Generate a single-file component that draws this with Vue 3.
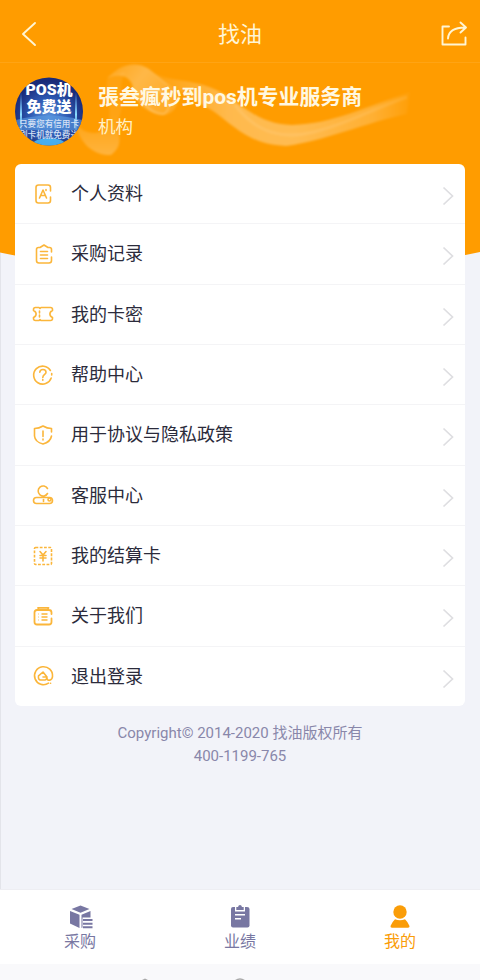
<script setup>
const items = [
  { icon: 'profile', label: '个人资料' },
  { icon: 'orders', label: '采购记录' },
  { icon: 'ticket', label: '我的卡密' },
  { icon: 'help', label: '帮助中心' },
  { icon: 'shield', label: '用于协议与隐私政策' },
  { icon: 'service', label: '客服中心' },
  { icon: 'bank', label: '我的结算卡' },
  { icon: 'about', label: '关于我们' },
  { icon: 'logout', label: '退出登录' },
]
</script>

<template>
  <div class="page">
    <svg class="backdrop" width="480" height="290" viewBox="0 0 480 290" aria-hidden="true">
      <defs>
        <filter id="soft" x="-10%" y="-20%" width="120%" height="140%"><feGaussianBlur stdDeviation="1.3" /></filter>
        <linearGradient id="sweep" gradientUnits="userSpaceOnUse" x1="150" x2="412" y1="0" y2="0">
          <stop offset="0" stop-color="#fff" stop-opacity=".03" />
          <stop offset=".3" stop-color="#fff" stop-opacity=".3" />
          <stop offset=".55" stop-color="#fff" stop-opacity=".32" />
          <stop offset=".85" stop-color="#fff" stop-opacity=".2" />
          <stop offset="1" stop-color="#fff" stop-opacity=".02" />
        </linearGradient>
        <linearGradient id="curl" gradientUnits="userSpaceOnUse" x1="110" x2="165" y1="64" y2="110">
          <stop offset="0" stop-color="#fff" stop-opacity=".1" />
          <stop offset=".45" stop-color="#fff" stop-opacity=".28" />
          <stop offset="1" stop-color="#fff" stop-opacity=".14" />
        </linearGradient>
        <linearGradient id="tail" gradientUnits="userSpaceOnUse" x1="0" x2="0" y1="70" y2="155">
          <stop offset="0" stop-color="#fff" stop-opacity=".06" />
          <stop offset=".6" stop-color="#fff" stop-opacity=".08" />
          <stop offset="1" stop-color="#fff" stop-opacity=".24" />
        </linearGradient>
      </defs>
      <path d="M0 0H480V252Q240 303 0 252.500Z" fill="#ff9c00" />
      <path d="M0 62.500H480" stroke="#ffa414" />
      <g filter="url(#soft)">
        <path d="M150 71C172 84 196 77 224 94C246 108 260 124 292 125C333 124 367 106 410 92L407 114C365 123 324 141 286 146C249 145 232 124 213 111C197 102 184 91 164 84Z" fill="url(#sweep)" />
        <path d="M108 78C119 65 135 60 149 69C160 78 168 84 177 91C180 104 174 115 162 115C145 112 136 104 133 88C132 78 121 72 108 78Z" fill="url(#curl)" />
        <path d="M108 76C103 96 116 112 105 129C96 137 82 132 76 124C79 143 94 156 111 155C127 143 115 131 118 120C126 106 116 90 125 72Z" fill="url(#tail)" />
        <path d="M144 90C140 104 151 114 164 114C176 105 162 95 158 88" fill="none" stroke="#fff" stroke-opacity=".2" stroke-width="2" />
        <path d="M235 105C258 135 285 139 314 132C347 124 368 111 407 97" fill="none" stroke="#fff" stroke-opacity=".1" stroke-width="3" />
      </g>
    </svg>

    <header class="bar">
      <svg class="back" width="18" height="26" viewBox="0 0 18 26"><path d="M15 2L3 13L15 24" /></svg>
      <h1>找油</h1>
      <svg class="share" width="30" height="28" viewBox="0 0 30 28">
        <path d="M10 6.500H3.500V24.500H26.500V17.500M9 18.500C9.500 11 15 7.500 26 7.500M21.500 2.500L27 7.500L21.500 12.500" />
      </svg>
    </header>

    <section class="user">
      <svg class="avatar" width="70" height="70" viewBox="0 0 70 70">
        <defs>
          <radialGradient id="blue" cx=".5" cy=".58" r=".52">
            <stop offset="0" stop-color="#5a92dc" />
            <stop offset=".55" stop-color="#2c57b0" />
            <stop offset="1" stop-color="#1a2a78" />
          </radialGradient>
          <linearGradient id="glow" x1="0" x2="0" y1="0" y2="1">
            <stop offset="0" stop-color="#6ebcff" stop-opacity="0" />
            <stop offset=".5" stop-color="#8bdcff" />
            <stop offset="1" stop-color="#62bbff" stop-opacity="0" />
          </linearGradient>
          <clipPath id="round"><circle cx="35" cy="34.500" r="34" /></clipPath>
        </defs>
        <g clip-path="url(#round)">
          <rect width="70" height="70" fill="url(#blue)" />
          <path d="M2 43Q35 34 68 43V53H2Z" fill="#5797df" opacity=".65" />
          <rect x="6" y="15" width="2" height="45" fill="url(#glow)" />
          <rect x="61" y="15" width="2" height="45" fill="url(#glow)" />
          <ellipse cx="35" cy="67" rx="16" ry="6" fill="#51c7ff" opacity=".8" />
          <g class="avatar-text">
            <text x="35" y="18" font-size="14.500" textLength="47" lengthAdjust="spacingAndGlyphs">POS机</text>
            <text x="35" y="34.500" font-size="14.500" textLength="45" lengthAdjust="spacingAndGlyphs">免费送</text>
            <text class="small" x="35" y="49.500" font-size="9" textLength="60" lengthAdjust="spacingAndGlyphs">只要您有信用卡</text>
            <text class="small" x="35" y="60.500" font-size="9" textLength="60" lengthAdjust="spacingAndGlyphs">刷卡机就免费送</text>
          </g>
        </g>
      </svg>
      <div class="identity">
        <h2>張叁瘋秒到pos机专业服务商</h2>
        <p>机构</p>
      </div>
    </section>

    <main class="card">
      <div v-for="item in items" :key="item.icon" class="row">
        <svg class="icon" width="22" height="22" viewBox="0 0 22 22">
          <template v-if="item.icon === 'profile'">
            <path d="M18.500 8V4.500Q18.500 2 16 2H6.500Q4 2 4 4.500V17.500Q4 20 6.500 20H16Q18.500 20 18.500 17.500V14" />
            <path d="M7.500 15L11 7L14.500 15M8.800 12.500H13.300M14 6.500V7.500" />
          </template>
          <template v-else-if="item.icon === 'orders'">
            <path d="M19.500 9V6.500Q19.500 4.500 17.500 4.500H16L12 2L8 4.500H6.500Q4.500 4.500 4.500 6.500V17.500Q4.500 20 7 20H17Q19.500 20 19.500 17.500V14" />
            <path d="M8.500 8.500H15.500M8.500 12H15.500M8.500 15.500H15.500" />
          </template>
          <template v-else-if="item.icon === 'ticket'">
            <path d="M3.500 4.500H7L8 5.500L9 4.500H18.500Q20.500 4.500 20.500 6.500V7.500C17 9 17 13 20.500 14.500V15.500Q20.500 17.500 18.500 17.500H9L8 16.500L7 17.500H3.500Q1.500 17.500 1.500 15.500V14.500C5 13 5 9 1.500 7.500V6.500Q1.500 4.500 3.500 4.500Z" />
            <path d="M7.500 8V10M7.500 12V14" />
          </template>
          <template v-else-if="item.icon === 'help'">
            <path d="M18.400 6.500A9 9 0 1 0 19.200 14M19.700 9.500V11" />
            <path d="M7.800 8.300C8 4.500 14 4.500 14 8.300C14 10.500 10.800 10.500 10.800 13.500M10.800 15.500V16.200" />
          </template>
          <template v-else-if="item.icon === 'shield'">
            <path d="M19.500 8V4.500Q15 4.500 11 2Q7 4.500 2.500 4.500V12Q3 18 11 20Q18.500 18 19.500 12" />
            <path d="M11 7V12.500M11 15V16" />
          </template>
          <template v-else-if="item.icon === 'service'">
            <path d="M15.500 4.500A5 5 0 1 0 15.500 9.500M4.500 13.500H17.500A3 3 0 0 1 17.500 19.500H4.500A3 3 0 0 1 4.500 13.500Z" />
            <path d="M11.500 15.500V17.500" />
            <circle cx="17.500" cy="15.500" r="1.500" />
          </template>
          <template v-else-if="item.icon === 'bank'">
            <rect x="2.500" y="2.500" width="17" height="17" rx="1" stroke-linecap="butt" stroke-dasharray="2.800 1.450" />
            <path d="M8 6.500L11 10L14 6.500M11 10V16M8 10.500H14M8 13H14" />
          </template>
          <template v-else-if="item.icon === 'about'">
            <path d="M19.500 9V7.500Q19.500 5 17 5H5Q2.500 5 2.500 7.500V17Q2.500 19.500 5 19.500H17Q19.500 19.500 19.500 17V13.500M6 2.800H16.500M6 5L6.500 3M16 3L16.500 5" stroke-width="1.800" />
            <path d="M6.500 9H7M9.500 9H15.500M6.500 12H7M9.500 12H15.500M6.500 15H7M9.500 15H15.500" stroke-linecap="butt" stroke-width="1.700" />
          </template>
          <template v-else>
            <path d="M16.500 18.200A9 9 0 1 1 20.500 11.500C20.300 15.500 15.500 16.500 14.800 13.500" />
            <path d="M15 12L11 7L6.500 10.800Q6 15 8.500 15H13Q15 14.500 15 12H11M18.500 18.300H18.600" />
          </template>
        </svg>
        <span class="label">{{ item.label }}</span>
        <svg class="chevron" width="12" height="20" viewBox="0 0 12 20"><path d="M1.500 1.500L10.500 10L1.500 18.500" /></svg>
      </div>
    </main>

    <footer class="copyright">
      <p>Copyright© 2014-2020 找油版权所有</p>
      <p>400-1199-765</p>
    </footer>

    <nav class="tabs">
      <div class="tab">
        <svg width="26" height="26" viewBox="0 0 26 26">
          <path d="M13.500 1.500L22.500 5L13.500 8.800L4.500 5ZM3 7L12.500 10.800V24L3 19.500ZM14.500 10.800L23.500 7V13.500H15.500V23.500L14.500 24ZM16 15H25.500V17H16ZM16 18.700H25.500V20.700H16ZM16 22.300H25.500V24.300H16Z" />
        </svg>
        <span>采购</span>
      </div>
      <div class="tab">
        <svg width="26" height="26" viewBox="0 0 26 26">
          <path d="M6 3H20Q22.500 3 22.500 5V21.500Q22.500 23.500 20.500 23.500H6Q4 23.500 4 21.500V5Q4 3 6 3Z" />
          <path class="cut" d="M8 2H18V7.500H8ZM8 10H18V11.500H8ZM8 14H14V15.500H8Z" />
          <path d="M9.300 3H11Q11.500 1 13 1T15 3H16.700V6H9.300Z" />
        </svg>
        <span>业绩</span>
      </div>
      <div class="tab active">
        <svg width="26" height="26" viewBox="0 0 26 26">
          <circle cx="13" cy="8" r="6.700" />
          <path d="M8 15.200Q13 17.500 18 15.200Q21 18 22.500 22Q22.800 23.800 21 23.800H5Q3.200 23.800 3.500 22Q5 18 8 15.200Z" />
        </svg>
        <span>我的</span>
      </div>
    </nav>
    <div class="system">
      <svg width="480" height="16" viewBox="0 0 480 16">
        <path d="M142 16L145 14.500L148 16Z" fill="#aaa" />
        <path d="M235 17Q240 13 245 17" fill="none" stroke="#aaa" stroke-width="1.500" />
      </svg>
    </div>
  </div>
</template>

<style>
body { margin: 0; }
</style>

<style scoped>
.page {
  position: relative;
  display: flex;
  flex-direction: column;
  box-sizing: border-box;
  width: 480px;
  height: 980px;
  overflow: hidden;
  background: #f2f3f9;
  font-family: Roboto, "Noto Sans CJK SC", sans-serif;
  box-shadow: inset 1px 0 #e3e4ea;
}
svg { display: block; flex: none; }
h1, h2, p { margin: 0; }
.backdrop { position: absolute; top: 0; left: 0; }
.bar, .user, .card { position: relative; }
.bar {
  display: flex;
  align-items: center;
  justify-content: space-between;
  height: 68px;
  padding: 0 11px 0 20px;
  box-sizing: border-box;
}
.bar h1 { padding-top: 2px; color: #fff5d4; font-size: 22px; line-height: 30px; font-weight: 400; margin-left: 3px; }
.back, .share { fill: none; stroke: #fff5d4; stroke-width: 1.900; stroke-linejoin: round; stroke-linecap: round; }
.user { display: flex; height: 96px; box-sizing: border-box; padding: 9px 14px; gap: 14px; }
.avatar-text { fill: #fff; text-anchor: middle; font-weight: 900; font-family: Roboto, "Noto Sans CJK SC", sans-serif; }
.avatar-text .small { fill: #d5e1f5; font-weight: 500; }
.identity { padding-top: 5px; color: #fff8e2; }
.identity h2 { font-size: 20.900px; line-height: 30px; font-weight: 700; white-space: nowrap; }
.identity p { font-size: 17.500px; line-height: 30px; color: #fff0c5; }
.card { margin: 0 15px; height: 542px; display: flex; flex-direction: column; background: #fff; border-radius: 6px; overflow: hidden; }
.row { flex: 1; display: flex; align-items: center; box-sizing: border-box; padding: 0 11px 0 17px; border-bottom: 1px solid #f4f4f6; }
.row:last-child { border-bottom: 0; }
.icon { fill: none; stroke: #fbb63b; stroke-width: 1.600; stroke-linecap: round; stroke-linejoin: round; }
.label { flex: 1; margin-left: 17px; padding-top: 1px; font-size: 18px; line-height: 26px; color: #2b2b3b; }
.chevron { margin-top: 5px; fill: none; stroke: #dedee1; stroke-width: 1.700; }
.copyright { padding-top: 16px; text-align: center; color: #8987aa; font-size: 15px; line-height: 22.500px; }
.tabs { margin-top: auto; height: 75px; flex: none; display: flex; background: #fff; border-top: 1px solid #eeeef3; box-sizing: border-box; }
.tab { flex: 1; display: flex; flex-direction: column; align-items: center; padding-top: 14px; color: #7877a2; font-size: 16px; line-height: 23px; }
.tab svg { fill: currentColor; }
.tab .cut { fill: #fff; }
.tab.active { color: #fa9d08; }
.system { height: 16px; flex: none; background: #f9f9fb; }
</style>
